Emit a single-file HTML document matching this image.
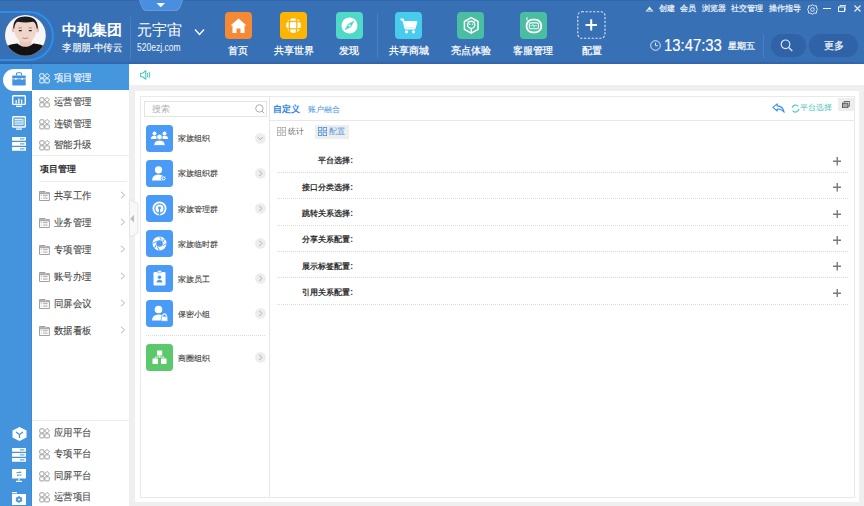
<!DOCTYPE html>
<html><head><meta charset="utf-8">
<style>
*{box-sizing:border-box;margin:0;padding:0}
html,body{width:864px;height:506px;overflow:hidden;background:#efefef;font-family:"Liberation Sans",sans-serif;position:relative}
#hdr{position:absolute;left:0;top:0;width:864px;height:64px;background:#3770b4;border-bottom:2px solid #2f66ad}
#rail{position:absolute;left:0;top:64px;width:32px;height:442px;background:#4394dc;border-right:1px solid #3a8ad6}
#sub{position:absolute;left:32px;top:64px;width:97px;height:442px;background:#fff;}
#topbar{position:absolute;left:129px;top:64px;width:735px;height:21px;background:#fff;}
#panel{position:absolute;left:135px;top:91px;width:724px;height:411px;background:#fff;}
#box{position:absolute;left:140px;top:96px;width:715px;height:402px;border:1px solid #e9e9e9;}
.t{position:absolute;white-space:nowrap;line-height:1}
svg{display:block}
.w{color:#fff}
.nav{position:absolute;top:11.5px;width:27px;height:27px;border-radius:4px}
.nav svg{position:absolute;left:0;top:0}
.nl{position:absolute;top:46.3px;font-size:9.6px;color:#fff;-webkit-text-stroke:0.25px #fff;white-space:nowrap;line-height:10px;text-align:center;width:60px}
.vs{position:absolute;width:1px;background:#4f82c2}
</style></head><body>
<div id="hdr">
  <div style="position:absolute;left:0;top:0;width:864px;height:1px;background:#3068ae"></div>
  <!-- pill ring -->
  <div style="position:absolute;left:-32px;top:10.5px;width:86px;height:50px;border:2px solid #2b90ea;border-radius:25px"></div>
  <svg style="position:absolute;left:4.7px;top:15.3px" width="41" height="41" viewBox="0 0 41 41">
    <defs><clipPath id="av"><circle cx="20.4" cy="20.4" r="20.4"/></clipPath></defs>
    <g clip-path="url(#av)">
      <rect width="41" height="41" fill="#f7f5f5"/>
      <rect x="14.5" y="22" width="12" height="10" fill="#e9c9bb"/>
      <path d="M0 41 L0 32.5 Q4 29 12.5 28.4 Q16 31.8 20.4 31.8 Q24.8 31.8 28.3 28.4 Q37 29 41 32.5 L41 41 Z" fill="#121212"/>
      <ellipse cx="8.3" cy="14.8" rx="1.6" ry="2.6" fill="#e6c2b2"/>
      <ellipse cx="32.6" cy="14.8" rx="1.6" ry="2.6" fill="#e6c2b2"/>
      <path d="M9 11 Q9 26.5 20.4 27.3 Q31.8 26.5 31.8 11 Q31 6 20.4 5.5 Q9.8 6 9 11 Z" fill="#f0d6ca"/>
      <path d="M8.3 13.5 Q7.8 1.7 20.4 1.6 Q33 1.7 32.8 13.5 L31.6 13.5 Q31 7.5 28 6.8 Q20.4 8 12.8 6.8 Q9.8 7.5 9.3 13.5 Z" fill="#1b1b1b"/>
      <path d="M13.8 15.6 h3 M23.8 15.6 h3" stroke="#3a2a28" stroke-width="1.1"/><path d="M13.3 12.9 h3.6 M23.5 12.9 h3.6" stroke="#4a3a36" stroke-width="0.8" opacity="0.6"/>
      <path d="M17.6 22.8 Q20.4 24.3 23.2 22.8" stroke="#c98078" stroke-width="1.1" fill="none"/>
    </g>
  </svg>
  <div class="t w" style="left:62px;top:21.5px;font-size:15px;font-weight:900">中机集团</div>
  <div class="t w" style="left:62px;top:43.2px;font-size:10px;transform:scaleX(0.95);transform-origin:0 0;color:#fff;-webkit-text-stroke:0.15px #fff">李朋朋-中传云</div>
  <div class="vs" style="left:130px;top:17px;height:43px;background:#4a7dbf"></div>
  <div class="t w" style="left:136.5px;top:22.5px;font-size:14.5px">元宇宙</div>
  <div class="t w" style="left:136.5px;top:43px;font-size:10px;color:#f4f7fc;transform:scaleX(0.85);transform-origin:0 0">520ezj.com</div>
  <svg style="position:absolute;left:194px;top:28px" width="11" height="8" viewBox="0 0 11 8"><path d="M1 1.5 L5.5 6.5 L10 1.5" stroke="#fff" stroke-width="1.3" fill="none"/></svg>
  <!-- top tab -->
  <svg style="position:absolute;left:138px;top:-1px" width="46" height="13" viewBox="0 0 46 13">
    <path d="M1 0 L45 0 L41.5 9 Q40.5 11.5 38 11.5 L8 11.5 Q5.5 11.5 4.5 9 Z" fill="#4a8edf" stroke="#6fa3e3" stroke-width="0.8"/>
    <path d="M18.5 4 L27 4 L22.75 8.2 Z" fill="#fff"/>
  </svg>

  <!-- nav icons -->
  <div class="nav" style="left:225px;background:#f68934">
    <svg width="27" height="27" viewBox="0 0 27 27"><path d="M13.5 6.5 L21.5 13.5 L19.5 13.5 L19.5 21 L15.5 21 L15.5 16.5 L11.5 16.5 L11.5 21 L7.5 21 L7.5 13.5 L5.5 13.5 Z" fill="#fff"/></svg>
  </div>
  <div class="nl" style="left:208px">首页</div>
  <div class="nav" style="left:280.2px;background:#ffb400">
    <svg width="27" height="27" viewBox="0 0 27 27"><circle cx="13.6" cy="13.6" r="7.4" fill="#fff"/><g stroke="#ffb400" stroke-width="1.3" fill="none"><path d="M5.8 9.9 Q13.6 8.8 21.4 9.9 M5.8 16.3 Q13.6 17.4 21.4 16.3"/><path d="M9.9 5.8 Q8.6 13.6 9.9 21.4 M16.3 5.8 Q17.6 13.6 16.3 21.4"/></g></svg>
  </div>
  <div class="nl" style="left:263.5px">共享世界</div>
  <div class="nav" style="left:336px;background:#4ed9c9">
    <svg width="27" height="27" viewBox="0 0 27 27"><circle cx="13.5" cy="13.5" r="8" fill="#fff"/><path d="M18.6 8.4 L15 15 L8.4 18.6 L12 12 Z" fill="#4ed9c9"/><circle cx="13.5" cy="13.5" r="1.1" fill="#fff"/></svg>
  </div>
  <div class="nl" style="left:319px">发现</div>
  <div class="vs" style="left:377px;top:13px;height:45px;background:#4a7dbf"></div>
  <div class="nav" style="left:395px;background:#48ccec">
    <svg width="27" height="27" viewBox="0 0 27 27"><path d="M5.5 7.5 H8 L10.5 16.5 H19.5 L21.5 10 H9" stroke="#fff" stroke-width="1.8" fill="none" stroke-linejoin="round"/><path d="M9.5 10 H21 L19.3 15.5 H11 Z" fill="#fff"/><circle cx="11.5" cy="19.8" r="1.6" fill="#fff"/><circle cx="18.5" cy="19.8" r="1.6" fill="#fff"/></svg>
  </div>
  <div class="nl" style="left:378.5px">共享商城</div>
  <div class="nav" style="left:457px;background:#4abea2">
    <svg width="27" height="27" viewBox="0 0 27 27"><path d="M14.2 5.6 L21 9.5 L21 17.3 L14.2 21.2 L7.4 17.3 L7.4 9.5 Z" stroke="#fff" stroke-width="1.5" fill="none" stroke-linejoin="round"/><circle cx="14.2" cy="12.8" r="3.6" stroke="#fff" stroke-width="1.4" fill="none"/><circle cx="12.9" cy="12.3" r="0.7" fill="#fff"/><circle cx="15.5" cy="12.3" r="0.7" fill="#fff"/><path d="M14.2 16.4 V21" stroke="#fff" stroke-width="1.3"/><path d="M10.5 9.5 L12 10.5 M17.9 9.5 L16.4 10.5" stroke="#fff" stroke-width="1"/></svg>
  </div>
  <div class="nl" style="left:440.5px">亮点体验</div>
  <div class="nav" style="left:519.5px;background:#4abea2">
    <svg width="27" height="27" viewBox="0 0 27 27"><rect x="6.6" y="7.6" width="14.6" height="12.8" rx="6" stroke="#fff" stroke-width="1.9" fill="none"/><rect x="8.8" y="10.3" width="10.2" height="7" rx="2" fill="#fff"/><rect x="9.9" y="11.4" width="8" height="4.8" rx="1" fill="#4abea2"/><path d="M10.5 13.8 H12 L12.8 12.3 L14 15.3 L15 13 L15.6 13.8 H17.3" stroke="#fff" stroke-width="0.7" fill="none"/><path d="M7 5.3 V8.5" stroke="#fff" stroke-width="1"/></svg>
  </div>
  <div class="nl" style="left:502.5px">客服管理</div>
  <svg style="position:absolute;left:577px;top:11px" width="29" height="28" viewBox="0 0 29 28"><rect x="0.8" y="0.8" width="27.2" height="26.4" rx="4" stroke="#dfe8f4" stroke-width="1.1" fill="none" stroke-dasharray="2.2 1.6"/><path d="M14.2 8.2 V19.6 M8.5 13.9 H19.9" stroke="#fff" stroke-width="2"/></svg>
  <div class="nl" style="left:561.5px">配置</div>

  <!-- top right small row -->
  <svg style="position:absolute;left:644.5px;top:5.5px" width="9" height="6" viewBox="0 0 9 6"><path d="M4.5 0.5 L8.5 5.5 H0.5 Z" fill="#e6eef8"/><path d="M2.5 4.3 H6.5" stroke="#3770b4" stroke-width="0.8"/></svg>
  <div class="t" style="left:658.5px;top:4.5px;font-size:8.2px;color:#f4f7fc;-webkit-text-stroke:0.2px #f4f7fc">创建</div>
  <div class="t" style="left:680px;top:4.5px;font-size:8.2px;color:#f4f7fc;-webkit-text-stroke:0.2px #f4f7fc">会员</div>
  <div class="t" style="left:701.5px;top:4.5px;font-size:8.2px;color:#f4f7fc;-webkit-text-stroke:0.2px #f4f7fc">浏览器</div>
  <div class="t" style="left:731px;top:4.5px;font-size:8.2px;color:#f4f7fc;-webkit-text-stroke:0.2px #f4f7fc">社交管理</div>
  <div class="t" style="left:769px;top:4.5px;font-size:8.2px;color:#f4f7fc;-webkit-text-stroke:0.2px #f4f7fc">操作指导</div>
  <svg style="position:absolute;left:806.5px;top:3.5px" width="11" height="11" viewBox="0 0 11 11"><path d="M5.5 0.8 L7.3 1.8 L9.4 1.9 L9.6 4 L10.4 5.5 L9.6 7 L9.4 9.1 L7.3 9.2 L5.5 10.2 L3.7 9.2 L1.6 9.1 L1.4 7 L0.6 5.5 L1.4 4 L1.6 1.9 L3.7 1.8 Z" stroke="#eef3fa" stroke-width="0.9" fill="none"/><circle cx="5.5" cy="5.5" r="1.8" stroke="#eef3fa" stroke-width="0.9" fill="none"/></svg>
  <div style="position:absolute;left:823px;top:8px;width:7.5px;height:1.2px;background:#eef3fa"></div>
  <svg style="position:absolute;left:837.7px;top:4.8px" width="8.5" height="7" viewBox="0 0 8.5 7"><rect x="0.5" y="2" width="6" height="4.5" stroke="#eef3fa" stroke-width="1" fill="none"/><path d="M2 2 V0.5 H8 V5 H6.5" stroke="#eef3fa" stroke-width="0.9" fill="none"/></svg>
  <svg style="position:absolute;left:853.6px;top:5px" width="7" height="7" viewBox="0 0 7 7"><path d="M0.5 0.5 L6.5 6.5 M6.5 0.5 L0.5 6.5" stroke="#eef3fa" stroke-width="1.1"/></svg>

  <!-- clock -->
  <svg style="position:absolute;left:649.5px;top:40px" width="11" height="11" viewBox="0 0 11 11"><circle cx="5.5" cy="5.5" r="4.8" stroke="#dde7f4" stroke-width="1" fill="none"/><path d="M5.5 2.7 V5.7 H7.8" stroke="#dde7f4" stroke-width="1" fill="none"/></svg>
  <div class="t w" style="left:663.5px;top:37px;font-size:16.5px;-webkit-text-stroke:0.2px #fff;transform:scaleX(0.9);transform-origin:0 0">13:47:33</div>
  <div class="t w" style="left:727.5px;top:42px;font-size:9.2px;color:#f4f7fc;-webkit-text-stroke:0.3px #f4f7fc">星期五</div>
  <div class="vs" style="left:763px;top:34px;height:24px;background:#4a7dbf"></div>
  <div style="position:absolute;left:770.5px;top:33.5px;width:35px;height:23.5px;border-radius:12px;background:#2f62a6"></div>
  <svg style="position:absolute;left:779.5px;top:39px" width="14" height="13" viewBox="0 0 14 13"><circle cx="5.5" cy="5.3" r="4.3" stroke="#dde7f4" stroke-width="1.2" fill="none"/><path d="M8.7 8.5 L12.3 12" stroke="#dde7f4" stroke-width="1.3"/></svg>
  <div style="position:absolute;left:809px;top:33.5px;width:48.5px;height:23.5px;border-radius:12px;background:#2f62a6"></div>
  <div class="t w" style="left:823.5px;top:41px;font-size:9.8px;color:#f4f7fc;-webkit-text-stroke:0.2px #f4f7fc">更多</div>
</div>

<div id="rail">
  <div style="position:absolute;left:3px;top:5px;width:30px;height:21.5px;background:#fff;border-radius:11px 0 0 11px"></div>
  <svg style="position:absolute;left:12px;top:7.5px" width="14" height="14" viewBox="0 0 14 14"><path d="M4.5 3.5 V1.8 Q4.5 0.8 5.5 0.8 H8.5 Q9.5 0.8 9.5 1.8 V3.5" stroke="#4394dc" stroke-width="1.1" fill="none"/><rect x="0.3" y="3.5" width="13.4" height="10" rx="0.8" fill="#4394dc"/><path d="M0.3 6.8 H13.7" stroke="#fff" stroke-width="0.7"/><rect x="3" y="6" width="1.6" height="1.6" fill="#fff"/><rect x="9.4" y="6" width="1.6" height="1.6" fill="#fff"/></svg>
  <svg style="position:absolute;left:12px;top:31px" width="14" height="12" viewBox="0 0 14 12"><rect x="0.7" y="0.7" width="12.6" height="8.7" rx="0.8" stroke="#fff" stroke-width="1.4" fill="none"/><path d="M4.2 8.6 V5.2 M6.9 8.6 V3.4 M9.6 8.6 V4.6" stroke="#fff" stroke-width="1.3"/><path d="M4 11.3 H10" stroke="#fff" stroke-width="1.3"/></svg>
  <svg style="position:absolute;left:12px;top:51.5px" width="14" height="14" viewBox="0 0 14 14"><rect x="0.7" y="0.7" width="12.6" height="10.3" rx="0.8" stroke="#fff" stroke-width="1.4" fill="none"/><rect x="2.2" y="2.2" width="9.6" height="7.3" fill="#fff" opacity="0.35"/><path d="M2.5 3.6 H10 M2.5 5.9 H10 M2.5 8.2 H10" stroke="#fff" stroke-width="1" opacity="0.9"/><path d="M10.9 3 V9" stroke="#fff" stroke-width="0.8"/><path d="M4 13.1 H10" stroke="#fff" stroke-width="1.3"/></svg>
  <svg style="position:absolute;left:12px;top:72.5px" width="14" height="14" viewBox="0 0 14 14"><rect x="0" y="0" width="14" height="3.8" rx="0.5" fill="#fff"/><rect x="0" y="5" width="14" height="3.8" rx="0.5" fill="#fff"/><rect x="0" y="10" width="14" height="3.8" rx="0.5" fill="#fff"/><path d="M8 1.9 H12.5 M8 6.9 H12.5 M8 11.9 H12.5" stroke="#4394dc" stroke-width="1"/></svg>

  <svg style="position:absolute;left:11.5px;top:362.5px" width="15" height="14" viewBox="0 0 15 14"><path d="M7.5 0 L14.5 3.5 V10.5 L7.5 14 L0.5 10.5 V3.5 Z" fill="#fff"/><path d="M4 5 L7.5 7.5 L11 5 M7.5 7.5 V11" stroke="#4394dc" stroke-width="1.3" fill="none"/></svg>
  <svg style="position:absolute;left:12px;top:383.5px" width="14" height="14" viewBox="0 0 14 14"><rect x="0" y="0" width="14" height="3.8" rx="0.5" fill="#fff"/><rect x="0" y="5" width="14" height="3.8" rx="0.5" fill="#fff"/><rect x="0" y="10" width="14" height="3.8" rx="0.5" fill="#fff"/><path d="M8 1.9 H12.5 M8 6.9 H12.5 M8 11.9 H12.5" stroke="#4394dc" stroke-width="1"/></svg>
  <svg style="position:absolute;left:12px;top:405px" width="14" height="13" viewBox="0 0 14 13"><rect x="0" y="0" width="14" height="9.5" rx="0.6" fill="#fff"/><path d="M4.5 3.5 H9 L7.8 2.3 M9.5 6 H5 L6.2 7.2" stroke="#4394dc" stroke-width="0.9" fill="none"/><path d="M7 9.5 V11.5 M4 12.3 H10" stroke="#fff" stroke-width="1.2"/></svg>
  <svg style="position:absolute;left:12px;top:426.5px" width="14" height="14" viewBox="0 0 14 14"><path d="M0 1 H5 V2.3 H0Z" fill="#fff"/><rect x="0" y="3" width="14" height="11" fill="#fff"/><circle cx="7" cy="8.5" r="2.8" fill="#4394dc"/><circle cx="7" cy="8.5" r="1" fill="#fff"/><path d="M7 5 V12 M3.8 6.7 L10.2 10.3 M3.8 10.3 L10.2 6.7" stroke="#4394dc" stroke-width="1.2"/><circle cx="7" cy="8.5" r="1.1" fill="#fff"/></svg>
</div>
<div id="sub">
  <div style="position:absolute;left:0;top:0;width:97px;height:26px;background:#4496dd"></div>
  <div style="position:absolute;left:7px;top:9.0px;width:11px;height:11px"><svg width="11" height="11" viewBox="0 0 11 11" style="position:absolute;left:0;top:0"><g stroke="#fff" stroke-width="0.95" fill="none"><rect x="0.8" y="0.8" width="4.2" height="4.1" rx="0.7"/><path d="M8.1 0.4 L10.5 2.8 L8.1 5.2 L5.7 2.8 Z" stroke-linejoin="round"/><rect x="0.8" y="5.8" width="4.2" height="4.1" rx="0.7"/><rect x="5.9" y="5.8" width="4.4" height="4.1" rx="0.7"/></g></svg></div><div class="t" style="left:22px;top:9.3px;font-size:10px;transform:scaleX(0.94);transform-origin:0 0;color:#fff;-webkit-text-stroke:0.1px #fff">项目管理</div>
<div style="position:absolute;left:7px;top:33.0px;width:11px;height:11px"><svg width="11" height="11" viewBox="0 0 11 11" style="position:absolute;left:0;top:0"><g stroke="#9a9a9a" stroke-width="0.95" fill="none"><rect x="0.8" y="0.8" width="4.2" height="4.1" rx="0.7"/><path d="M8.1 0.4 L10.5 2.8 L8.1 5.2 L5.7 2.8 Z" stroke-linejoin="round"/><rect x="0.8" y="5.8" width="4.2" height="4.1" rx="0.7"/><rect x="5.9" y="5.8" width="4.4" height="4.1" rx="0.7"/></g></svg></div><div class="t" style="left:22px;top:33.3px;font-size:10px;transform:scaleX(0.94);transform-origin:0 0;color:#444;-webkit-text-stroke:0.1px #444">运营管理</div>
<div style="position:absolute;left:7px;top:54.5px;width:11px;height:11px"><svg width="11" height="11" viewBox="0 0 11 11" style="position:absolute;left:0;top:0"><g stroke="#9a9a9a" stroke-width="0.95" fill="none"><rect x="0.8" y="0.8" width="4.2" height="4.1" rx="0.7"/><path d="M8.1 0.4 L10.5 2.8 L8.1 5.2 L5.7 2.8 Z" stroke-linejoin="round"/><rect x="0.8" y="5.8" width="4.2" height="4.1" rx="0.7"/><rect x="5.9" y="5.8" width="4.4" height="4.1" rx="0.7"/></g></svg></div><div class="t" style="left:22px;top:54.8px;font-size:10px;transform:scaleX(0.94);transform-origin:0 0;color:#444;-webkit-text-stroke:0.1px #444">连锁管理</div>
<div style="position:absolute;left:7px;top:75.5px;width:11px;height:11px"><svg width="11" height="11" viewBox="0 0 11 11" style="position:absolute;left:0;top:0"><g stroke="#9a9a9a" stroke-width="0.95" fill="none"><rect x="0.8" y="0.8" width="4.2" height="4.1" rx="0.7"/><path d="M8.1 0.4 L10.5 2.8 L8.1 5.2 L5.7 2.8 Z" stroke-linejoin="round"/><rect x="0.8" y="5.8" width="4.2" height="4.1" rx="0.7"/><rect x="5.9" y="5.8" width="4.4" height="4.1" rx="0.7"/></g></svg></div><div class="t" style="left:22px;top:75.8px;font-size:10px;transform:scaleX(0.94);transform-origin:0 0;color:#444;-webkit-text-stroke:0.1px #444">智能升级</div>
<div style="position:absolute;left:7px;top:363.8px;width:11px;height:11px"><svg width="11" height="11" viewBox="0 0 11 11" style="position:absolute;left:0;top:0"><g stroke="#9a9a9a" stroke-width="0.95" fill="none"><rect x="0.8" y="0.8" width="4.2" height="4.1" rx="0.7"/><path d="M8.1 0.4 L10.5 2.8 L8.1 5.2 L5.7 2.8 Z" stroke-linejoin="round"/><rect x="0.8" y="5.8" width="4.2" height="4.1" rx="0.7"/><rect x="5.9" y="5.8" width="4.4" height="4.1" rx="0.7"/></g></svg></div><div class="t" style="left:22px;top:364.1px;font-size:10px;transform:scaleX(0.94);transform-origin:0 0;color:#444;-webkit-text-stroke:0.1px #444">应用平台</div>
<div style="position:absolute;left:7px;top:384.8px;width:11px;height:11px"><svg width="11" height="11" viewBox="0 0 11 11" style="position:absolute;left:0;top:0"><g stroke="#9a9a9a" stroke-width="0.95" fill="none"><rect x="0.8" y="0.8" width="4.2" height="4.1" rx="0.7"/><path d="M8.1 0.4 L10.5 2.8 L8.1 5.2 L5.7 2.8 Z" stroke-linejoin="round"/><rect x="0.8" y="5.8" width="4.2" height="4.1" rx="0.7"/><rect x="5.9" y="5.8" width="4.4" height="4.1" rx="0.7"/></g></svg></div><div class="t" style="left:22px;top:385.1px;font-size:10px;transform:scaleX(0.94);transform-origin:0 0;color:#444;-webkit-text-stroke:0.1px #444">专项平台</div>
<div style="position:absolute;left:7px;top:406.5px;width:11px;height:11px"><svg width="11" height="11" viewBox="0 0 11 11" style="position:absolute;left:0;top:0"><g stroke="#9a9a9a" stroke-width="0.95" fill="none"><rect x="0.8" y="0.8" width="4.2" height="4.1" rx="0.7"/><path d="M8.1 0.4 L10.5 2.8 L8.1 5.2 L5.7 2.8 Z" stroke-linejoin="round"/><rect x="0.8" y="5.8" width="4.2" height="4.1" rx="0.7"/><rect x="5.9" y="5.8" width="4.4" height="4.1" rx="0.7"/></g></svg></div><div class="t" style="left:22px;top:406.8px;font-size:10px;transform:scaleX(0.94);transform-origin:0 0;color:#444;-webkit-text-stroke:0.1px #444">同屏平台</div>
<div style="position:absolute;left:7px;top:428.0px;width:11px;height:11px"><svg width="11" height="11" viewBox="0 0 11 11" style="position:absolute;left:0;top:0"><g stroke="#9a9a9a" stroke-width="0.95" fill="none"><rect x="0.8" y="0.8" width="4.2" height="4.1" rx="0.7"/><path d="M8.1 0.4 L10.5 2.8 L8.1 5.2 L5.7 2.8 Z" stroke-linejoin="round"/><rect x="0.8" y="5.8" width="4.2" height="4.1" rx="0.7"/><rect x="5.9" y="5.8" width="4.4" height="4.1" rx="0.7"/></g></svg></div><div class="t" style="left:22px;top:428.3px;font-size:10px;transform:scaleX(0.94);transform-origin:0 0;color:#444;-webkit-text-stroke:0.1px #444">运营项目</div>

  <div style="position:absolute;left:0;top:91px;width:97px;height:1px;background:#ececec"></div>
  <div class="t" style="left:7.5px;top:100.5px;font-size:9.1px;font-weight:bold;color:#333">项目管理</div>
  <div style="position:absolute;left:7px;top:116.5px;width:88px;height:1px;background:#ececec"></div>
  <div style="position:absolute;left:7.2px;top:127.2px;width:11px;height:10px"><svg width="11" height="10" viewBox="0 0 11 10" style="position:absolute;left:0;top:0"><path d="M0.5 0.5 H6.2 L7.2 1.6 H10.4 V9.5 H0.5 Z" stroke="#9c9c9c" stroke-width="0.95" fill="none" stroke-linejoin="round"/><path d="M0.5 0.9 H6 L6.9 1.9 H10.4 V2.7 H0.5Z" fill="#b5b5b5"/><path d="M0.5 2.8 H10.4" stroke="#9c9c9c" stroke-width="0.9"/><path d="M2.3 4.2 V5.2 M2.3 6.7 V7.5 M4.1 4.7 H8.6 M4.1 7.1 H8.6" stroke="#9c9c9c" stroke-width="0.9"/></svg></div><div class="t" style="left:21.5px;top:127.0px;font-size:10px;transform:scaleX(0.94);transform-origin:0 0;color:#444;-webkit-text-stroke:0.1px #444">共享工作</div><svg style="position:absolute;left:88px;top:127.0px" width="6" height="8" viewBox="0 0 6 8"><path d="M1 0.8 L4.6 4 L1 7.2" stroke="#aaa" stroke-width="0.9" fill="none"/></svg>
<div style="position:absolute;left:7.2px;top:154.1px;width:11px;height:10px"><svg width="11" height="10" viewBox="0 0 11 10" style="position:absolute;left:0;top:0"><path d="M0.5 0.5 H6.2 L7.2 1.6 H10.4 V9.5 H0.5 Z" stroke="#9c9c9c" stroke-width="0.95" fill="none" stroke-linejoin="round"/><path d="M0.5 0.9 H6 L6.9 1.9 H10.4 V2.7 H0.5Z" fill="#b5b5b5"/><path d="M0.5 2.8 H10.4" stroke="#9c9c9c" stroke-width="0.9"/><path d="M2.3 4.2 V5.2 M2.3 6.7 V7.5 M4.1 4.7 H8.6 M4.1 7.1 H8.6" stroke="#9c9c9c" stroke-width="0.9"/></svg></div><div class="t" style="left:21.5px;top:153.9px;font-size:10px;transform:scaleX(0.94);transform-origin:0 0;color:#444;-webkit-text-stroke:0.1px #444">业务管理</div><svg style="position:absolute;left:88px;top:153.9px" width="6" height="8" viewBox="0 0 6 8"><path d="M1 0.8 L4.6 4 L1 7.2" stroke="#aaa" stroke-width="0.9" fill="none"/></svg>
<div style="position:absolute;left:7.2px;top:181.0px;width:11px;height:10px"><svg width="11" height="10" viewBox="0 0 11 10" style="position:absolute;left:0;top:0"><path d="M0.5 0.5 H6.2 L7.2 1.6 H10.4 V9.5 H0.5 Z" stroke="#9c9c9c" stroke-width="0.95" fill="none" stroke-linejoin="round"/><path d="M0.5 0.9 H6 L6.9 1.9 H10.4 V2.7 H0.5Z" fill="#b5b5b5"/><path d="M0.5 2.8 H10.4" stroke="#9c9c9c" stroke-width="0.9"/><path d="M2.3 4.2 V5.2 M2.3 6.7 V7.5 M4.1 4.7 H8.6 M4.1 7.1 H8.6" stroke="#9c9c9c" stroke-width="0.9"/></svg></div><div class="t" style="left:21.5px;top:180.8px;font-size:10px;transform:scaleX(0.94);transform-origin:0 0;color:#444;-webkit-text-stroke:0.1px #444">专项管理</div><svg style="position:absolute;left:88px;top:180.8px" width="6" height="8" viewBox="0 0 6 8"><path d="M1 0.8 L4.6 4 L1 7.2" stroke="#aaa" stroke-width="0.9" fill="none"/></svg>
<div style="position:absolute;left:7.2px;top:207.9px;width:11px;height:10px"><svg width="11" height="10" viewBox="0 0 11 10" style="position:absolute;left:0;top:0"><path d="M0.5 0.5 H6.2 L7.2 1.6 H10.4 V9.5 H0.5 Z" stroke="#9c9c9c" stroke-width="0.95" fill="none" stroke-linejoin="round"/><path d="M0.5 0.9 H6 L6.9 1.9 H10.4 V2.7 H0.5Z" fill="#b5b5b5"/><path d="M0.5 2.8 H10.4" stroke="#9c9c9c" stroke-width="0.9"/><path d="M2.3 4.2 V5.2 M2.3 6.7 V7.5 M4.1 4.7 H8.6 M4.1 7.1 H8.6" stroke="#9c9c9c" stroke-width="0.9"/></svg></div><div class="t" style="left:21.5px;top:207.7px;font-size:10px;transform:scaleX(0.94);transform-origin:0 0;color:#444;-webkit-text-stroke:0.1px #444">账号办理</div><svg style="position:absolute;left:88px;top:207.7px" width="6" height="8" viewBox="0 0 6 8"><path d="M1 0.8 L4.6 4 L1 7.2" stroke="#aaa" stroke-width="0.9" fill="none"/></svg>
<div style="position:absolute;left:7.2px;top:234.8px;width:11px;height:10px"><svg width="11" height="10" viewBox="0 0 11 10" style="position:absolute;left:0;top:0"><path d="M0.5 0.5 H6.2 L7.2 1.6 H10.4 V9.5 H0.5 Z" stroke="#9c9c9c" stroke-width="0.95" fill="none" stroke-linejoin="round"/><path d="M0.5 0.9 H6 L6.9 1.9 H10.4 V2.7 H0.5Z" fill="#b5b5b5"/><path d="M0.5 2.8 H10.4" stroke="#9c9c9c" stroke-width="0.9"/><path d="M2.3 4.2 V5.2 M2.3 6.7 V7.5 M4.1 4.7 H8.6 M4.1 7.1 H8.6" stroke="#9c9c9c" stroke-width="0.9"/></svg></div><div class="t" style="left:21.5px;top:234.6px;font-size:10px;transform:scaleX(0.94);transform-origin:0 0;color:#444;-webkit-text-stroke:0.1px #444">同屏会议</div><svg style="position:absolute;left:88px;top:234.6px" width="6" height="8" viewBox="0 0 6 8"><path d="M1 0.8 L4.6 4 L1 7.2" stroke="#aaa" stroke-width="0.9" fill="none"/></svg>
<div style="position:absolute;left:7.2px;top:261.7px;width:11px;height:10px"><svg width="11" height="10" viewBox="0 0 11 10" style="position:absolute;left:0;top:0"><path d="M0.5 0.5 H6.2 L7.2 1.6 H10.4 V9.5 H0.5 Z" stroke="#9c9c9c" stroke-width="0.95" fill="none" stroke-linejoin="round"/><path d="M0.5 0.9 H6 L6.9 1.9 H10.4 V2.7 H0.5Z" fill="#b5b5b5"/><path d="M0.5 2.8 H10.4" stroke="#9c9c9c" stroke-width="0.9"/><path d="M2.3 4.2 V5.2 M2.3 6.7 V7.5 M4.1 4.7 H8.6 M4.1 7.1 H8.6" stroke="#9c9c9c" stroke-width="0.9"/></svg></div><div class="t" style="left:21.5px;top:261.5px;font-size:10px;transform:scaleX(0.94);transform-origin:0 0;color:#444;-webkit-text-stroke:0.1px #444">数据看板</div><svg style="position:absolute;left:88px;top:261.5px" width="6" height="8" viewBox="0 0 6 8"><path d="M1 0.8 L4.6 4 L1 7.2" stroke="#aaa" stroke-width="0.9" fill="none"/></svg>

  <div style="position:absolute;left:0;top:356px;width:97px;height:1px;background:#ececec"></div>
</div>

<div id="topbar">
  <svg style="position:absolute;left:11px;top:5.5px" width="11" height="10" viewBox="0 0 11 10"><path d="M0.6 3.3 H2.6 L5.8 0.8 V9.2 L2.6 6.7 H0.6 Z" stroke="#4cc8c0" stroke-width="1.1" fill="none" stroke-linejoin="round"/><path d="M7.4 3 Q8.4 5 7.4 7 M9 1.8 Q10.6 5 9 8.2" stroke="#4cc8c0" stroke-width="1" fill="none"/></svg>
</div>
<div style="position:absolute;left:129px;top:85px;width:735px;height:421px;background:#efefef"></div>
<div id="panel"></div>
<div id="box"></div>
<svg style="position:absolute;left:129px;top:199px" width="10" height="39" viewBox="0 0 10 39"><path d="M0.5 0.5 L9 4.5 V34 L0.5 38 Z" fill="#f8f8f8" stroke="#e2e2e2" stroke-width="0.9"/><path d="M5 15.8 V23.6 L1.3 19.7 Z" fill="#bdbdbd"/></svg>
<div style="position:absolute;left:269px;top:97px;width:1px;height:400px;background:#e6e6e6"></div>
<div style="position:absolute;left:144.3px;top:100.6px;width:123.2px;height:16px;border:1px solid #e4e4e4;background:#fff"></div>
<div class="t" style="left:151.5px;top:104.6px;font-size:8.6px;color:#b0b0b0">搜索</div>
<svg style="position:absolute;left:254.8px;top:103.6px" width="10" height="10" viewBox="0 0 10 10"><circle cx="4.4" cy="4.4" r="3.7" stroke="#a5a5a5" stroke-width="0.9" fill="none"/><path d="M7.1 7.1 L9.3 9.3" stroke="#a5a5a5" stroke-width="1"/></svg>
<div style="position:absolute;left:146px;top:124.5px;width:27px;height:27px;border-radius:3.5px;background:#4a9bf8"><svg width="27" height="27" viewBox="0 0 27 27" style="position:absolute;left:0;top:0"><circle cx="8.5" cy="8.6" r="2" fill="#fff"/><path d="M4.8 14 Q5 10.8 8.5 10.8 Q11 10.8 11.8 12.5 L9.8 14 Z" fill="#fff"/><circle cx="18.5" cy="8.6" r="2" fill="#fff"/><path d="M22.2 14 Q22 10.8 18.5 10.8 Q16 10.8 15.2 12.5 L17.2 14 Z" fill="#fff"/><circle cx="13.5" cy="12" r="2.8" fill="#fff" stroke="#4a9bf8" stroke-width="0.8"/><path d="M7.8 20.5 Q8 15.2 13.5 15.2 Q19 15.2 19.2 20.5 Z" fill="#fff" stroke="#4a9bf8" stroke-width="0.8"/></svg></div>
<div class="t" style="left:177.5px;top:135.3px;font-size:7.8px;color:#3a3a3a;-webkit-text-stroke:0.1px #3a3a3a">家族组织</div>
<svg style="position:absolute;left:254.7px;top:132.6px" width="11" height="11" viewBox="0 0 11 11"><circle cx="5.4" cy="5.4" r="5.4" fill="#ededed"/><path d="M2.8 4.2 L5.4 6.6 L8 4.2" stroke="#a8a8a8" stroke-width="0.9" fill="none"/></svg>
<div style="position:absolute;left:146px;top:159.6px;width:27px;height:27px;border-radius:3.5px;background:#4a9bf8"><svg width="27" height="27" viewBox="0 0 27 27" style="position:absolute;left:0;top:0"><circle cx="12.5" cy="9.8" r="3.6" fill="#fff"/><path d="M6 20.5 Q6.3 14.5 12.5 14.5 Q18.7 14.5 19 20.5 Z" fill="#fff"/><circle cx="17.5" cy="18.3" r="2.4" fill="#fff" stroke="#4a9bf8" stroke-width="0.8"/><circle cx="17.5" cy="18.3" r="1.1" fill="#4a9bf8"/></svg></div>
<div class="t" style="left:177.5px;top:170.4px;font-size:7.8px;color:#3a3a3a;-webkit-text-stroke:0.1px #3a3a3a">家族组织群</div>
<svg style="position:absolute;left:254.7px;top:167.7px" width="11" height="11" viewBox="0 0 11 11"><circle cx="5.4" cy="5.4" r="5.4" fill="#ededed"/><path d="M4.4 2.8 L6.8 5.4 L4.4 8" stroke="#a8a8a8" stroke-width="0.9" fill="none"/></svg>
<div style="position:absolute;left:146px;top:194.7px;width:27px;height:27px;border-radius:3.5px;background:#4a9bf8"><svg width="27" height="27" viewBox="0 0 27 27" style="position:absolute;left:0;top:0"><circle cx="13.5" cy="13.5" r="7" fill="#fff"/><circle cx="13.5" cy="13.5" r="4.6" fill="none" stroke="#4a9bf8" stroke-width="1.2"/><circle cx="13.5" cy="13" r="1.4" fill="#4a9bf8"/><path d="M13.5 13 V20.5" stroke="#4a9bf8" stroke-width="1.3"/></svg></div>
<div class="t" style="left:177.5px;top:205.5px;font-size:7.8px;color:#3a3a3a;-webkit-text-stroke:0.1px #3a3a3a">家族管理群</div>
<svg style="position:absolute;left:254.7px;top:202.8px" width="11" height="11" viewBox="0 0 11 11"><circle cx="5.4" cy="5.4" r="5.4" fill="#ededed"/><path d="M4.4 2.8 L6.8 5.4 L4.4 8" stroke="#a8a8a8" stroke-width="0.9" fill="none"/></svg>
<div style="position:absolute;left:146px;top:229.8px;width:27px;height:27px;border-radius:3.5px;background:#4a9bf8"><svg width="27" height="27" viewBox="0 0 27 27" style="position:absolute;left:0;top:0"><circle cx="13.5" cy="13.5" r="7" fill="#fff"/><circle cx="13.5" cy="13.5" r="3.3" fill="#4a9bf8"/><g stroke="#4a9bf8" stroke-width="0.9"><path d="M13.5 6.5 L15.8 10.5"/><path d="M20.5 13.5 L16.5 15.8"/><path d="M13.5 20.5 L11.2 16.5"/><path d="M6.5 13.5 L10.5 11.2"/><path d="M18.5 8.5 L17 12"/><path d="M8.5 18.5 L10 15"/></g></svg></div>
<div class="t" style="left:177.5px;top:240.6px;font-size:7.8px;color:#3a3a3a;-webkit-text-stroke:0.1px #3a3a3a">家族临时群</div>
<svg style="position:absolute;left:254.7px;top:237.9px" width="11" height="11" viewBox="0 0 11 11"><circle cx="5.4" cy="5.4" r="5.4" fill="#ededed"/><path d="M4.4 2.8 L6.8 5.4 L4.4 8" stroke="#a8a8a8" stroke-width="0.9" fill="none"/></svg>
<div style="position:absolute;left:146px;top:264.8px;width:27px;height:27px;border-radius:3.5px;background:#4a9bf8"><svg width="27" height="27" viewBox="0 0 27 27" style="position:absolute;left:0;top:0"><rect x="7.5" y="7" width="12" height="13.5" rx="1.3" fill="#fff"/><rect x="11.5" y="5.6" width="4" height="2.2" rx="0.6" fill="#fff" stroke="#4a9bf8" stroke-width="0.6"/><circle cx="13.5" cy="12.3" r="1.8" fill="#4a9bf8"/><path d="M10.5 17.5 Q10.8 14.8 13.5 14.8 Q16.2 14.8 16.5 17.5 Z" fill="#4a9bf8"/></svg></div>
<div class="t" style="left:177.5px;top:275.6px;font-size:7.8px;color:#3a3a3a;-webkit-text-stroke:0.1px #3a3a3a">家族员工</div>
<svg style="position:absolute;left:254.7px;top:272.9px" width="11" height="11" viewBox="0 0 11 11"><circle cx="5.4" cy="5.4" r="5.4" fill="#ededed"/><path d="M4.4 2.8 L6.8 5.4 L4.4 8" stroke="#a8a8a8" stroke-width="0.9" fill="none"/></svg>
<div style="position:absolute;left:146px;top:299.8px;width:27px;height:27px;border-radius:3.5px;background:#4a9bf8"><svg width="27" height="27" viewBox="0 0 27 27" style="position:absolute;left:0;top:0"><circle cx="12.5" cy="9.5" r="3.8" fill="#fff"/><path d="M6 20.5 Q6.2 14.5 12.5 14.5 Q15 14.5 16.3 15.5 L16 20.5 Z" fill="#fff"/><rect x="15.3" y="16.3" width="6.5" height="5" rx="0.6" fill="#fff" stroke="#4a9bf8" stroke-width="0.7"/><path d="M16.8 16.5 V15 Q18.55 12.8 20.3 15 V16.5" stroke="#fff" stroke-width="1.1" fill="none"/></svg></div>
<div class="t" style="left:177.5px;top:310.6px;font-size:7.8px;color:#3a3a3a;-webkit-text-stroke:0.1px #3a3a3a">保密小组</div>
<svg style="position:absolute;left:254.7px;top:307.9px" width="11" height="11" viewBox="0 0 11 11"><circle cx="5.4" cy="5.4" r="5.4" fill="#ededed"/><path d="M4.4 2.8 L6.8 5.4 L4.4 8" stroke="#a8a8a8" stroke-width="0.9" fill="none"/></svg>
<div style="position:absolute;left:146px;top:343.8px;width:27px;height:27px;border-radius:3.5px;background:#5bc86b"><svg width="27" height="27" viewBox="0 0 27 27" style="position:absolute;left:0;top:0"><rect x="11" y="6.5" width="5.2" height="5" fill="#fff"/><rect x="6.5" y="14.5" width="5.5" height="5.5" fill="#fff"/><rect x="15" y="14.5" width="5.5" height="5.5" fill="#fff"/><path d="M13.6 11.5 V13 M9.3 14.5 V13 H17.8 V14.5" stroke="#fff" stroke-width="0.8" fill="none"/></svg></div>
<div class="t" style="left:177.5px;top:354.6px;font-size:7.8px;color:#3a3a3a;-webkit-text-stroke:0.1px #3a3a3a">商圈组织</div>
<svg style="position:absolute;left:254.7px;top:351.9px" width="11" height="11" viewBox="0 0 11 11"><circle cx="5.4" cy="5.4" r="5.4" fill="#ededed"/><path d="M4.4 2.8 L6.8 5.4 L4.4 8" stroke="#a8a8a8" stroke-width="0.9" fill="none"/></svg>
<div style="position:absolute;left:145.5px;top:335px;width:119.5px;height:1px;background:repeating-linear-gradient(90deg,#dcdcdc 0 1px,transparent 1px 2px)"></div>
<div class="t" style="left:273px;top:104.6px;font-size:9.3px;font-weight:bold;color:#2d84e3">自定义</div>
<div class="t" style="left:307.8px;top:106px;font-size:8.2px;color:#3f8fe3">账户融合</div>
<div style="position:absolute;left:270px;top:120px;width:584px;height:1px;background:#e8e8e8"></div>
<div style="position:absolute;left:277.2px;top:127.3px"><svg width="9" height="9" viewBox="0 0 9 9"><g stroke="#aaa" stroke-width="0.8" fill="none"><rect x="0.4" y="0.4" width="3.4" height="3.4"/><rect x="5.2" y="0.4" width="3.4" height="3.4"/><rect x="0.4" y="5.2" width="3.4" height="3.4"/><rect x="5.2" y="5.2" width="3.4" height="3.4"/></g></svg></div>
<div class="t" style="left:287.5px;top:127.3px;font-size:8.3px;color:#666">统计</div>
<div style="position:absolute;left:314.5px;top:124.5px;width:34.5px;height:14.5px;background:#eeeeee"></div>
<div style="position:absolute;left:318.2px;top:127.3px"><svg width="9" height="9" viewBox="0 0 9 9"><g stroke="#4a8fe0" stroke-width="0.8" fill="none"><rect x="0.4" y="0.4" width="3.4" height="3.4"/><rect x="5.2" y="0.4" width="3.4" height="3.4"/><rect x="0.4" y="5.2" width="3.4" height="3.4"/><rect x="5.2" y="5.2" width="3.4" height="3.4"/></g></svg></div>
<div class="t" style="left:328.6px;top:127.3px;font-size:8.3px;color:#4a8fe0">配置</div>
<svg style="position:absolute;left:772px;top:103.3px" width="13" height="10" viewBox="0 0 13 10"><path d="M5.2 0.8 L0.9 4.4 L5.2 8 L5.2 6 Q9.5 5.6 12.2 9.3 Q11 3.2 5.2 2.9 Z" stroke="#3d8fe8" stroke-width="1.1" fill="none" stroke-linejoin="round"/></svg>
<svg style="position:absolute;left:791.3px;top:104px" width="9" height="9" viewBox="0 0 9 9"><path d="M1.1 3.6 A3.6 3.6 0 0 1 7.4 2.4 M8 5 A3.6 3.6 0 0 1 1.6 6.6" stroke="#4cc5c0" stroke-width="1.2" fill="none"/></svg>
<div class="t" style="left:800.3px;top:103.8px;font-size:8.2px;color:#45c3bb">平台选择</div>
<div style="position:absolute;left:837.6px;top:97.5px;width:16px;height:13px;background:#eeeeee"></div>
<svg style="position:absolute;left:841.6px;top:100.6px" width="8.2" height="7.2" viewBox="0 0 8.2 7.2"><path d="M2.2 2 V0.45 H7.75 V5 H6" stroke="#555" stroke-width="0.9" fill="none"/><rect x="0.45" y="2.2" width="5.5" height="4.55" stroke="#555" stroke-width="0.9" fill="#aaa"/></svg>
<div class="t" style="left:252px;width:101px;text-align:right;top:156.3px;font-size:8.4px;font-weight:bold;color:#333">平台选择:</div>
<div style="position:absolute;left:277px;top:172.0px;width:571px;height:1px;background:repeating-linear-gradient(90deg,#d9d9d9 0 1px,transparent 1px 2px)"></div>
<svg style="position:absolute;left:832.9px;top:157.1px" width="8.5" height="8.5" viewBox="0 0 8.5 8.5"><path d="M4.25 0 V8.5 M0 4.25 H8.5" stroke="#7a7a7a" stroke-width="1.4"/></svg>
<div class="t" style="left:252px;width:101px;text-align:right;top:182.6px;font-size:8.4px;font-weight:bold;color:#333">接口分类选择:</div>
<div style="position:absolute;left:277px;top:198.3px;width:571px;height:1px;background:repeating-linear-gradient(90deg,#d9d9d9 0 1px,transparent 1px 2px)"></div>
<svg style="position:absolute;left:832.9px;top:183.4px" width="8.5" height="8.5" viewBox="0 0 8.5 8.5"><path d="M4.25 0 V8.5 M0 4.25 H8.5" stroke="#7a7a7a" stroke-width="1.4"/></svg>
<div class="t" style="left:252px;width:101px;text-align:right;top:208.9px;font-size:8.4px;font-weight:bold;color:#333">跳转关系选择:</div>
<div style="position:absolute;left:277px;top:224.6px;width:571px;height:1px;background:repeating-linear-gradient(90deg,#d9d9d9 0 1px,transparent 1px 2px)"></div>
<svg style="position:absolute;left:832.9px;top:209.7px" width="8.5" height="8.5" viewBox="0 0 8.5 8.5"><path d="M4.25 0 V8.5 M0 4.25 H8.5" stroke="#7a7a7a" stroke-width="1.4"/></svg>
<div class="t" style="left:252px;width:101px;text-align:right;top:235.2px;font-size:8.4px;font-weight:bold;color:#333">分享关系配置:</div>
<div style="position:absolute;left:277px;top:250.9px;width:571px;height:1px;background:repeating-linear-gradient(90deg,#d9d9d9 0 1px,transparent 1px 2px)"></div>
<svg style="position:absolute;left:832.9px;top:236.0px" width="8.5" height="8.5" viewBox="0 0 8.5 8.5"><path d="M4.25 0 V8.5 M0 4.25 H8.5" stroke="#7a7a7a" stroke-width="1.4"/></svg>
<div class="t" style="left:252px;width:101px;text-align:right;top:261.5px;font-size:8.4px;font-weight:bold;color:#333">展示标签配置:</div>
<div style="position:absolute;left:277px;top:277.2px;width:571px;height:1px;background:repeating-linear-gradient(90deg,#d9d9d9 0 1px,transparent 1px 2px)"></div>
<svg style="position:absolute;left:832.9px;top:262.2px" width="8.5" height="8.5" viewBox="0 0 8.5 8.5"><path d="M4.25 0 V8.5 M0 4.25 H8.5" stroke="#7a7a7a" stroke-width="1.4"/></svg>
<div class="t" style="left:252px;width:101px;text-align:right;top:287.8px;font-size:8.4px;font-weight:bold;color:#333">引用关系配置:</div>
<div style="position:absolute;left:277px;top:303.5px;width:571px;height:1px;background:repeating-linear-gradient(90deg,#d9d9d9 0 1px,transparent 1px 2px)"></div>
<svg style="position:absolute;left:832.9px;top:288.5px" width="8.5" height="8.5" viewBox="0 0 8.5 8.5"><path d="M4.25 0 V8.5 M0 4.25 H8.5" stroke="#7a7a7a" stroke-width="1.4"/></svg>
</body></html>
